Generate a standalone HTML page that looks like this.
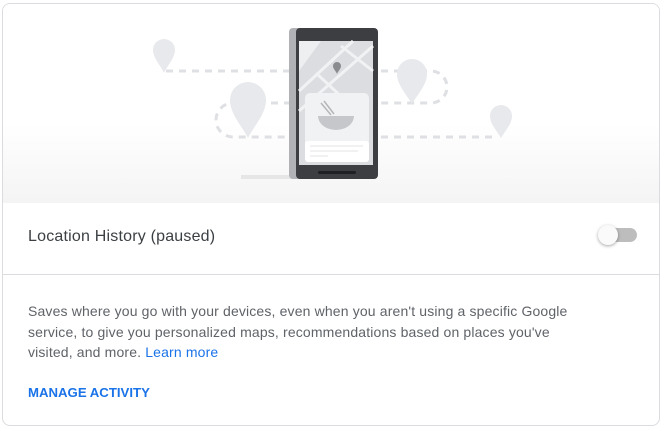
<!DOCTYPE html>
<html><head><meta charset="utf-8"><style>
body{margin:0;background:#fff;width:665px;height:431px;overflow:hidden;font-family:"Liberation Sans",Arial,sans-serif}
.card{position:absolute;left:2px;top:3px;width:658px;height:423px;border:1px solid #dadce0;border-radius:8px;overflow:hidden;box-sizing:border-box}
.hdr{position:absolute;left:0;top:0;width:100%;height:199px;background:linear-gradient(#fff 0,#fff 120px,#f4f4f4 199px)}
.t1{position:absolute;left:25px;top:224px;font-size:16px;color:#3c4043;letter-spacing:.2px}
.div{position:absolute;left:0;top:270px;width:100%;height:1px;background:#dadce0}
.p{position:absolute;left:25px;top:297px;width:545px;font-size:14px;line-height:20.5px;color:#5f6368;letter-spacing:.15px}
.p a{color:#1a73e8;text-decoration:none}
.m{position:absolute;left:25px;top:381px;font-size:13.2px;font-weight:bold;color:#1a73e8}
.track{position:absolute;left:605px;top:228px;width:32px;height:14px;border-radius:7px;background:#bdbdbd}
.knob{position:absolute;left:598px;top:225px;width:20px;height:20px;border-radius:50%;background:#fafafa;box-shadow:0 1px 3px rgba(0,0,0,.35)}
</style></head><body>
<div class="card">
<div class="hdr"></div>
<svg width="658" height="199" style="position:absolute;left:0;top:0" viewBox="2 3 658 199">
<g fill="none" stroke="#dfe0e3" stroke-width="3" stroke-dasharray="7 6">
<path d="M165 70 H290"/>
<path d="M380 70 H430 a16 16 0 0 1 0 32 H380"/>
<path d="M290 102 H232 a17 17 0 0 0 0 34 H290"/>
<path d="M380 136 H495"/>
</g>
<g fill="#e8e9ec">
<path d="M163 38 a11 11 0 0 1 11 11 c0 8 -8 16 -11 23 c-3 -7 -11 -15 -11 -23 a11 11 0 0 1 11 -11z"/>
<path d="M247 81 a18 18 0 0 1 18 18 c0 14 -12 26 -18 38 c-6 -12 -18 -24 -18 -38 a18 18 0 0 1 18 -18z"/>
<path d="M411 58 a15 15 0 0 1 15 15 c0 11 -10 21 -15 30 c-5 -9 -15 -19 -15 -30 a15 15 0 0 1 15 -15z"/>
<path d="M500 104 a11 11 0 0 1 11 11 c0 8 -7 15 -11 22 c-4 -7 -11 -14 -11 -22 a11 11 0 0 1 11 -11z"/>
</g>
<rect x="240" y="174" width="55" height="4" fill="#e6e6e6"/>
<rect x="288" y="27" width="20" height="151" rx="4" fill="#b0b2b6"/>
<rect x="295" y="27" width="82" height="151" rx="4" fill="#3c3e42"/>
<rect x="298" y="40" width="74" height="124" fill="#dcdde0"/>
<path d="M298 40 H320 L298 70z" fill="#eeeff1"/>
<g stroke="#f1f2f4" stroke-width="3" fill="none">
<path d="M298 90 L352 40"/><path d="M298 110 L372 45"/><path d="M315 72 L345 100"/><path d="M340 45 L372 70"/>
</g>
<path d="M336 61 a4 4 0 0 1 4 4 c0 3 -3 5 -4 8 c-1 -3 -4 -5 -4 -8 a4 4 0 0 1 4 -4z" fill="#8a8b8f"/>
<rect x="304" y="92" width="64" height="69" rx="5" fill="#f1f2f4"/>
<rect x="304" y="140" width="64" height="21" rx="3" fill="#fff"/>
<path d="M317 115 h36 a18 14 0 0 1 -36 0z" fill="#c6c7ca"/>
<path d="M320 102 L330 114 M323 100 L333 113" stroke="#b5b6b9" stroke-width="1.5"/>
<line x1="309" y1="145" x2="362" y2="145" stroke="#e3e3e3"/>
<line x1="309" y1="150" x2="357" y2="150" stroke="#e3e3e3"/>
<line x1="309" y1="155" x2="327" y2="155" stroke="#e3e3e3"/>
<rect x="317" y="170" width="38" height="3" rx="1.5" fill="#1f2023"/>
</svg>
<div class="t1">Location History (paused)</div>
<div class="div"></div>
<div class="p">Saves where you go with your devices, even when you aren't using a specific Google service, to give you personalized maps, recommendations based on places you've<br>visited, and more. <a>Learn more</a></div>
<div class="m">MANAGE ACTIVITY</div>
</div>
<div class="track"></div><div class="knob"></div>
</body></html>
